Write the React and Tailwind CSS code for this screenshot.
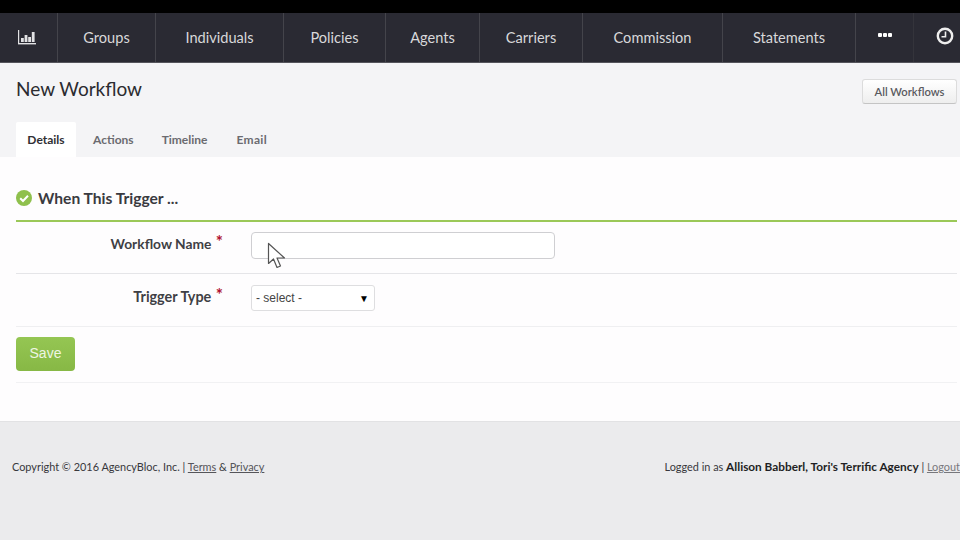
const navItems = [
  ['Groups', 'w-[98px]'],
  ['Individuals', 'w-[128px]'],
  ['Policies', 'w-[102px]'],
  ['Agents', 'w-[94px]'],
  ['Carriers', 'w-[103px]'],
  ['Commission', 'w-[140px]'],
  ['Statements', 'w-[133px]'],
]

const Cursor = () => (
  <svg className="absolute left-[16px] top-[10px]" width="20" height="28" viewBox="0 0 20 28">
    <path d="M1.5 1.5 L1.5 21.5 L6.5 17 L10 25.5 L13.5 24 L10 16 L17.5 16 Z" fill="#fff" stroke="#555" strokeWidth="1.2" strokeLinejoin="round" />
  </svg>
)

const Required = () => (
  <span className="text-[#b01030] text-[17px] leading-none align-[1px] ml-[1px]">*</span>
)

const App = () => {
  return (
    <div className="w-[960px] h-[540px] overflow-hidden flex flex-col bg-white font-['Lato','Noto_Sans',sans-serif]">
      <div className="h-[13px] bg-black shrink-0"></div>

      <nav className="h-[50px] shrink-0 flex bg-[#2a2a33] border-b border-[#55555c] text-[#d8d8da] text-[14.6px]">
        <div className="w-[58px] flex items-center justify-center border-r border-[#44444b] pr-[4px] pb-[1px]">
          <svg width="18" height="15" viewBox="0 0 18 15" fill="#e2e2e4">
            <rect x="0" y="0" width="1.2" height="14" />
            <rect x="0" y="13" width="18" height="1.4" />
            <rect x="3" y="8" width="2.8" height="4" />
            <rect x="6.6" y="5" width="2.8" height="7" />
            <rect x="10.2" y="7" width="2.8" height="5" />
            <rect x="13.8" y="2" width="2.8" height="10" />
          </svg>
        </div>
        {navItems.map(([label, width]) => (
          <div key={label} className={`${width} flex items-center justify-center border-r border-[#44444b] pt-[1px]`}>
            {label}
          </div>
        ))}
        <div className="w-[58px] flex justify-center border-r border-[#34343b] pt-[20px]">
          <div className="flex gap-[1px]">
            <span className="w-[4px] h-[4px] bg-white rounded-[1px]"></span>
            <span className="w-[4px] h-[4px] bg-white rounded-[1px]"></span>
            <span className="w-[4px] h-[4px] bg-white rounded-[1px]"></span>
          </div>
        </div>
        <div className="flex-1 flex justify-center pt-[14px] pl-[16px]">
          <svg width="18" height="18" viewBox="0 0 18 18" fill="none" stroke="#eeeeee">
            <circle cx="9" cy="9" r="7.2" strokeWidth="2.4" />
            <path d="M9.5 4.5 V9.8 H5.5" strokeWidth="1.6" />
          </svg>
        </div>
      </nav>

      <div className="h-[94px] shrink-0 bg-[#f4f4f6] flex flex-col justify-between pl-[16px] pr-[3px]">
        <div className="flex justify-between items-start pt-[16px]">
          <h1 className="text-[19px] leading-[22px] text-[#2b2b30] -mt-[1px]">New Workflow</h1>
          <button className="h-[25px] w-[95px] pt-[1px] rounded-[3px] bg-gradient-to-b from-[#ffffff] to-[#eeeeee] border border-[#dcdcdc] border-b-[#c4c4c4] text-[11.2px] font-semibold text-[#5a5a5f]">
            All Workflows
          </button>
        </div>
        <div className="flex text-[12px] font-bold text-[#6b6b70] h-[35px]">
          <div className="w-[60px] bg-white text-[#2f2f34] flex items-center justify-center rounded-t-[2px]">Details</div>
          <div className="ml-[17px] flex items-center">Actions</div>
          <div className="ml-[28px] flex items-center">Timeline</div>
          <div className="ml-[29px] flex items-center tracking-[0.3px]">Email</div>
        </div>
      </div>

      <div className="h-[264px] shrink-0 bg-[#fefdfe] pl-[16px] pr-[3px]">
        <div className="h-[65px] flex items-center gap-[6px] border-b-2 border-[#9bc858] pt-[20px]">
          <svg width="16" height="16" viewBox="0 0 16 16" className="mb-[2px]">
            <circle cx="8" cy="8" r="8" fill="#8fc04d" />
            <path d="M4.2 8.2 L7 11 L12 5.8" fill="none" stroke="#fff" strokeWidth="2" />
          </svg>
          <h2 className="text-[15.6px] font-bold text-[#3a3a40]">When This Trigger ...</h2>
        </div>

        <div className="h-[52px] flex items-start border-b border-[#e5e5e8] pt-[10px]">
          <label className="w-[207px] text-right text-[13.8px] font-bold text-[#3f3f45] leading-[24px]">
            Workflow Name <Required />
          </label>
          <div className="relative ml-[28px]">
            <input className="block w-[304px] h-[27px] bg-white border border-[#cfcfd2] rounded-[4px]" />
            <Cursor />
          </div>
        </div>

        <div className="h-[53px] flex items-start border-b border-[#efeff1] pt-[11px]">
          <label className="w-[207px] text-right text-[14.4px] font-bold text-[#3f3f45] leading-[24px]">
            Trigger Type <Required />
          </label>
          <div className="ml-[28px] w-[124px] h-[26px] flex items-center justify-between bg-white border border-[#dedee0] rounded-[3px] px-[4px] text-[12px] text-[#444] font-['Liberation_Sans',sans-serif]">
            <span>- select -</span>
            <span className="text-[10px] text-black pr-[1px]">▼</span>
          </div>
        </div>

        <div className="h-[56px] border-b border-[#f1f1f3] pt-[10px]">
          <button className="w-[59px] h-[34px] pb-[1px] rounded-[4px] bg-gradient-to-b from-[#95c653] to-[#87b845] text-[#eef5e2] text-[14px] font-['Liberation_Sans',sans-serif]">
            Save
          </button>
        </div>
      </div>

      <footer className="flex-1 bg-[#ebebed] border-t border-[#e2e2e4] flex justify-between pl-[12px] pt-[37px] text-[10.9px] leading-[16px] text-[#38383c]">
        <div>
          Copyright © 2016 AgencyBloc, Inc. | <a className="underline text-[#55555a]">Terms</a> &amp; <a className="underline text-[#55555a]">Privacy</a>
        </div>
        <div className="whitespace-nowrap">
          Logged in as <b className="text-[#1f1f24] text-[11.8px] leading-none">Allison Babberl, Tori's Terrific Agency</b> | <a className="underline text-[#77777c]">Logout</a>
        </div>
      </footer>
    </div>
  )
}

export default App
